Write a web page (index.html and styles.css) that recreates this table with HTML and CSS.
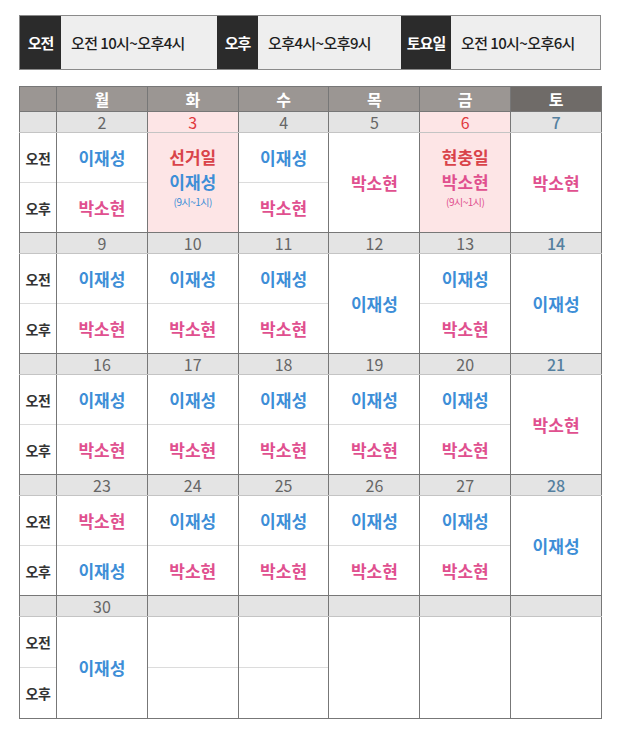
FILE: index.html
```html
<!DOCTYPE html>
<html>
<head>
<meta charset="utf-8">
<title>진료 시간표</title>
<link rel="stylesheet" href="styles.css">
</head>
<body>

<div class="hours">
	<div class="hourTag">오전</div>
	<div class="hourText hourAm">오전 10시~오후4시</div>
	<div class="hourTag">오후</div>
	<div class="hourText hourPm">오후4시~오후9시</div>
	<div class="hourTag hourSat">토요일</div>
	<div class="hourText">오전 10시~오후6시</div>
</div>

<table class="calTable">
	<colgroup>
		<col class="colLabel">
		<col class="colDay"><col class="colDay"><col class="colDay">
		<col class="colDay"><col class="colDay"><col class="colDay">
	</colgroup>
	<tr class="weekHead">
		<th></th><th>월</th><th>화</th><th>수</th><th>목</th><th>금</th><th class="sat">토</th>
	</tr>

	<!-- 1주 -->
	<tr class="dateRow">
		<td></td><td>2</td><td class="holiday">3</td><td>4</td><td>5</td><td class="holiday">6</td><td class="satNum">7</td>
	</tr>
	<tr class="amRow">
		<td class="label">오전</td>
		<td class="lee">이재성</td>
		<td class="offday" rowspan=2>
			<div class="offName">선거일</div>
			<div class="lee">이재성</div>
			<div class="note lee">(9시~1시)</div>
		</td>
		<td class="lee">이재성</td>
		<td class="park" rowspan=2>박소현</td>
		<td class="offday" rowspan=2>
			<div class="offName">현충일</div>
			<div class="park">박소현</div>
			<div class="note park">(9시~1시)</div>
		</td>
		<td class="park" rowspan=2>박소현</td>
	</tr>
	<tr class="pmRow">
		<td class="label">오후</td>
		<td class="park">박소현</td>
		<td class="park">박소현</td>
	</tr>

	<!-- 2주 -->
	<tr class="dateRow">
		<td></td><td>9</td><td>10</td><td>11</td><td>12</td><td>13</td><td class="satNum">14</td>
	</tr>
	<tr class="amRow">
		<td class="label">오전</td>
		<td class="lee">이재성</td>
		<td class="lee">이재성</td>
		<td class="lee">이재성</td>
		<td class="lee" rowspan=2>이재성</td>
		<td class="lee">이재성</td>
		<td class="lee" rowspan=2>이재성</td>
	</tr>
	<tr class="pmRow">
		<td class="label">오후</td>
		<td class="park">박소현</td>
		<td class="park">박소현</td>
		<td class="park">박소현</td>
		<td class="park">박소현</td>
	</tr>

	<!-- 3주 -->
	<tr class="dateRow">
		<td></td><td>16</td><td>17</td><td>18</td><td>19</td><td>20</td><td class="satNum">21</td>
	</tr>
	<tr class="amRow">
		<td class="label">오전</td>
		<td class="lee">이재성</td>
		<td class="lee">이재성</td>
		<td class="lee">이재성</td>
		<td class="lee">이재성</td>
		<td class="lee">이재성</td>
		<td class="park" rowspan=2>박소현</td>
	</tr>
	<tr class="pmRow">
		<td class="label">오후</td>
		<td class="park">박소현</td>
		<td class="park">박소현</td>
		<td class="park">박소현</td>
		<td class="park">박소현</td>
		<td class="park">박소현</td>
	</tr>

	<!-- 4주 -->
	<tr class="dateRow">
		<td></td><td>23</td><td>24</td><td>25</td><td>26</td><td>27</td><td class="satNum">28</td>
	</tr>
	<tr class="amRow">
		<td class="label">오전</td>
		<td class="park">박소현</td>
		<td class="lee">이재성</td>
		<td class="lee">이재성</td>
		<td class="lee">이재성</td>
		<td class="lee">이재성</td>
		<td class="lee" rowspan=2>이재성</td>
	</tr>
	<tr class="pmRow">
		<td class="label">오후</td>
		<td class="lee">이재성</td>
		<td class="park">박소현</td>
		<td class="park">박소현</td>
		<td class="park">박소현</td>
		<td class="park">박소현</td>
	</tr>

	<!-- 5주 -->
	<tr class="dateRow">
		<td></td><td>30</td><td></td><td></td><td></td><td></td><td></td>
	</tr>
	<tr class="amRow lastWeek">
		<td class="label">오전</td>
		<td class="lee" rowspan=2>이재성</td>
		<td></td>
		<td></td>
		<td rowspan=2></td>
		<td rowspan=2></td>
		<td rowspan=2></td>
	</tr>
	<tr class="pmRow lastWeek">
		<td class="label">오후</td>
		<td></td>
		<td></td>
	</tr>
</table>

</body>
</html>
```

FILE: styles.css
```css
body{
	margin:8px;
	font-family:"Noto Sans CJK KR", "Noto Sans", sans-serif;
	background:#fff;
}
.hours{
	display:flex;
	width:580px;
	height:53px;
	margin:7px 0 0 11px;
	border:1px #8a8a8a solid;
	background:#eeeeee;
}
.hourTag{
	display:flex;
	align-items:center;
	justify-content:center;
	width:41px;
	background:#2b2b2b;
	color:#fff;
	font-size:15px;
	font-weight:bold;
	letter-spacing:-1px;
}
.hourSat{
	width:50px;
}
.hourText{
	display:flex;
	align-items:center;
	padding-left:10px;
	color:#1e1e1e;
	font-size:15px;
	font-weight:500;
	letter-spacing:-0.6px;
}
.hourAm{
	width:146px;
}
.hourPm{
	width:133px;
}
.calTable{
	table-layout:fixed;
	border-collapse:collapse;
	width:583px;
	margin:16px 0 0 11px;
	border:1px #777 solid;
	text-align:center;
}
.colLabel{
	width:37px;
}
.calTable td, .calTable th{
	padding:0;
	border-left:1px #777 solid;
	border-right:1px #777 solid;
}
.weekHead th{
	height:23px;
	background:#9b9693;
	color:#fff;
	font-size:16px;
	font-weight:bold;
	border-bottom:1px #777 solid;
}
.weekHead th.sat{
	background:#6f6b68;
}
.dateRow td{
	height:20px;
	background:#e4e4e4;
	color:#666;
	font-size:16px;
	line-height:20px;
	border-top:1px #777 solid;
	border-bottom:1px #c4c4c4 solid;
}
.dateRow td.holiday{
	background:#fde5e6;
	color:#e0393e;
}
.dateRow td.satNum{
	color:#55809f;
	font-weight:500;
}
.amRow td{
	height:49px;
	font-size:17px;
	font-weight:bold;
}
.pmRow td{
	height:49px;
	font-size:17px;
	font-weight:bold;
	border-top:1px #dcdcdc solid;
}
.lastWeek td{
	height:50px;
}
.calTable td.label{
	color:#333;
	font-size:14px;
	letter-spacing:-0.5px;
}
.lee{
	color:#3d8ed7;
}
.park{
	color:#e0508f;
}
.calTable td.offday{
	background:#fde5e6;
	padding-bottom:12px;
	line-height:20px;
}
.offName{
	color:#d9434a;
	margin-bottom:5px;
}
.note{
	margin-top:5px;
	font-size:10px;
	line-height:10px;
	font-weight:normal;
	letter-spacing:-0.5px;
}
```
